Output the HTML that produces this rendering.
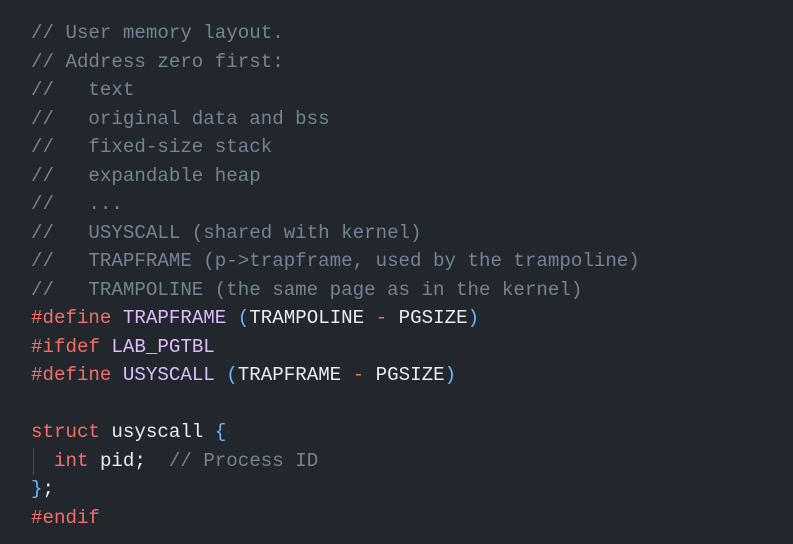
<!DOCTYPE html>
<html><head><meta charset="utf-8"><style>
html,body{margin:0;padding:0;background:#22272e;width:793px;height:544px;overflow:hidden}
pre{margin:0;position:absolute;left:31px;top:19px;font-family:"Liberation Mono",monospace;font-size:19.15px;line-height:28.5px;color:#e6edf3}
.c{color:#768390}.k{color:#f47067}.m{color:#dcbdfb}.p{color:#6cb6ff}
.guide{position:absolute;left:33px;top:448px;width:1px;height:27px;background:#444c56}
</style></head><body>
<div class="guide"></div>
<pre><span class="c">// User memory layout.
// Address zero first:
//   text
//   original data and bss
//   fixed-size stack
//   expandable heap
//   ...
//   USYSCALL (shared with kernel)
//   TRAPFRAME (p-&gt;trapframe, used by the trampoline)
//   TRAMPOLINE (the same page as in the kernel)</span>
<span class="k">#define</span> <span class="m">TRAPFRAME</span> <span class="p">(</span>TRAMPOLINE <span class="k">-</span> PGSIZE<span class="p">)</span>
<span class="k">#ifdef</span> <span class="m">LAB_PGTBL</span>
<span class="k">#define</span> <span class="m">USYSCALL</span> <span class="p">(</span>TRAPFRAME <span class="k">-</span> PGSIZE<span class="p">)</span>

<span class="k">struct</span> usyscall <span class="p">{</span>
  <span class="k">int</span> pid;  <span class="c">// Process ID</span>
<span class="p">}</span>;
<span class="k">#endif</span></pre>
</body></html>
